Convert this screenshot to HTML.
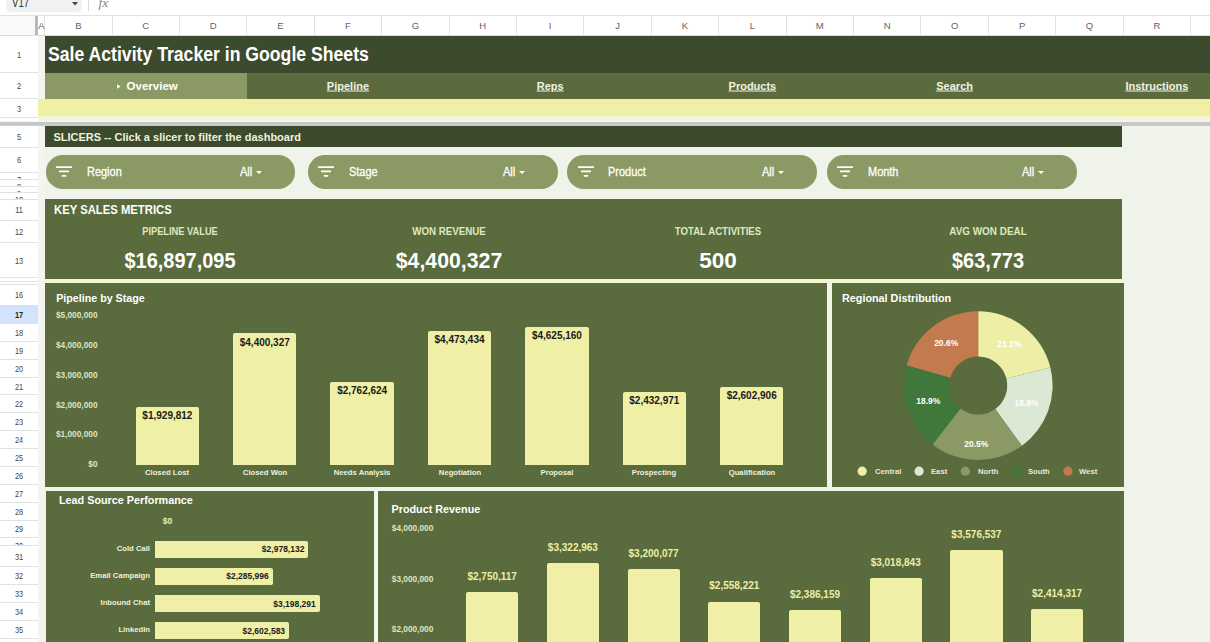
<!DOCTYPE html><html><head><meta charset="utf-8"><title>Sale Activity Tracker</title>
<style>
html,body{margin:0;padding:0;}
body{width:1210px;height:642px;overflow:hidden;position:relative;background:#f0f3ea;font-family:"Liberation Sans",sans-serif;}
.a{position:absolute;white-space:nowrap;}
.t{position:absolute;white-space:nowrap;line-height:1;}
.c{transform:translate(-50%,-50%);}
.r{transform:translate(-100%,-50%);}
.l{transform:translate(0,-50%);}
.b{font-weight:bold;}
</style></head><body>

<div class="a" style="left:0.00px;top:0.00px;width:1210.00px;height:15.00px;background:#ffffff;"></div>
<div class="a" style="left:5.60px;top:-6.00px;width:76.20px;height:18.40px;background:#eff1f2;border-radius:5px;"></div>
<div class="t l" style="left:12.40px;top:2.90px;font-size:12px;color:#303336;transform:translate(0,-50%) scaleX(0.8);transform-origin:left center;">V17</div>
<svg class="a" style="left:72.3px;top:1.9px" width="6" height="4" viewBox="0 0 6 4"><path d="M0 0H6L3 3.6Z" fill="#444746"/></svg>
<div class="a" style="left:88.40px;top:0.00px;width:1.00px;height:11.00px;background:#dadce0;"></div>
<div class="t" style="left:98.5px;top:-4px;font-size:13.5px;color:#80868b;font-style:italic;font-family:'Liberation Serif',serif;">fx</div>
<div class="a" style="left:0.00px;top:14.60px;width:1210.00px;height:1.00px;background:#dfe1e3;"></div>
<div class="a" style="left:0.00px;top:15.60px;width:1210.00px;height:20.00px;background:#ffffff;"></div>
<div class="a" style="left:0.00px;top:15.60px;width:35.30px;height:20.00px;background:#f8f9fa;"></div>
<div class="a" style="left:35.30px;top:15.60px;width:2.70px;height:20.00px;background:#b7b9bc;"></div>
<div class="a" style="left:0.00px;top:35.40px;width:1210.00px;height:0.80px;background:#dcdee0;"></div>
<div class="a" style="left:44.10px;top:15.60px;width:1.00px;height:20.00px;background:#e1e3e1;"></div>
<div class="t c" style="left:78.31px;top:25.80px;font-size:9.5px;color:#5f6368;">B</div>
<div class="a" style="left:111.51px;top:15.60px;width:1.00px;height:20.00px;background:#e1e3e1;"></div>
<div class="t c" style="left:145.71px;top:25.80px;font-size:9.5px;color:#5f6368;">C</div>
<div class="a" style="left:178.92px;top:15.60px;width:1.00px;height:20.00px;background:#e1e3e1;"></div>
<div class="t c" style="left:213.12px;top:25.80px;font-size:9.5px;color:#5f6368;">D</div>
<div class="a" style="left:246.33px;top:15.60px;width:1.00px;height:20.00px;background:#e1e3e1;"></div>
<div class="t c" style="left:280.53px;top:25.80px;font-size:9.5px;color:#5f6368;">E</div>
<div class="a" style="left:313.74px;top:15.60px;width:1.00px;height:20.00px;background:#e1e3e1;"></div>
<div class="t c" style="left:347.94px;top:25.80px;font-size:9.5px;color:#5f6368;">F</div>
<div class="a" style="left:381.15px;top:15.60px;width:1.00px;height:20.00px;background:#e1e3e1;"></div>
<div class="t c" style="left:415.35px;top:25.80px;font-size:9.5px;color:#5f6368;">G</div>
<div class="a" style="left:448.56px;top:15.60px;width:1.00px;height:20.00px;background:#e1e3e1;"></div>
<div class="t c" style="left:482.76px;top:25.80px;font-size:9.5px;color:#5f6368;">H</div>
<div class="a" style="left:515.97px;top:15.60px;width:1.00px;height:20.00px;background:#e1e3e1;"></div>
<div class="t c" style="left:550.18px;top:25.80px;font-size:9.5px;color:#5f6368;">I</div>
<div class="a" style="left:583.38px;top:15.60px;width:1.00px;height:20.00px;background:#e1e3e1;"></div>
<div class="t c" style="left:617.59px;top:25.80px;font-size:9.5px;color:#5f6368;">J</div>
<div class="a" style="left:650.79px;top:15.60px;width:1.00px;height:20.00px;background:#e1e3e1;"></div>
<div class="t c" style="left:685.00px;top:25.80px;font-size:9.5px;color:#5f6368;">K</div>
<div class="a" style="left:718.20px;top:15.60px;width:1.00px;height:20.00px;background:#e1e3e1;"></div>
<div class="t c" style="left:752.40px;top:25.80px;font-size:9.5px;color:#5f6368;">L</div>
<div class="a" style="left:785.61px;top:15.60px;width:1.00px;height:20.00px;background:#e1e3e1;"></div>
<div class="t c" style="left:819.82px;top:25.80px;font-size:9.5px;color:#5f6368;">M</div>
<div class="a" style="left:853.02px;top:15.60px;width:1.00px;height:20.00px;background:#e1e3e1;"></div>
<div class="t c" style="left:887.23px;top:25.80px;font-size:9.5px;color:#5f6368;">N</div>
<div class="a" style="left:920.43px;top:15.60px;width:1.00px;height:20.00px;background:#e1e3e1;"></div>
<div class="t c" style="left:954.63px;top:25.80px;font-size:9.5px;color:#5f6368;">O</div>
<div class="a" style="left:987.84px;top:15.60px;width:1.00px;height:20.00px;background:#e1e3e1;"></div>
<div class="t c" style="left:1022.05px;top:25.80px;font-size:9.5px;color:#5f6368;">P</div>
<div class="a" style="left:1055.25px;top:15.60px;width:1.00px;height:20.00px;background:#e1e3e1;"></div>
<div class="t c" style="left:1089.45px;top:25.80px;font-size:9.5px;color:#5f6368;">Q</div>
<div class="a" style="left:1122.66px;top:15.60px;width:1.00px;height:20.00px;background:#e1e3e1;"></div>
<div class="t c" style="left:1156.86px;top:25.80px;font-size:9.5px;color:#5f6368;">R</div>
<div class="a" style="left:1190.07px;top:15.60px;width:1.00px;height:20.00px;background:#e1e3e1;"></div>
<div class="t c" style="left:41.40px;top:25.80px;font-size:9.5px;color:#5f6368;">A</div>
<div class="a" style="left:0.00px;top:36.00px;width:38.20px;height:606.00px;background:#ffffff;"></div>
<div class="a" style="left:38.20px;top:36.00px;width:6.40px;height:606.00px;background:#f3f5ee;"></div>
<div class="a" style="left:0.00px;top:72.10px;width:38.20px;height:1.00px;background:#dfe1e3;"></div>
<div class="t c" style="left:19.00px;top:54.80px;font-size:9.7px;color:#44474a;transform:translate(-50%,-50%) scaleX(0.76);transform-origin:center;">1</div>
<div class="a" style="left:0.00px;top:98.10px;width:38.20px;height:1.00px;background:#dfe1e3;"></div>
<div class="t c" style="left:19.00px;top:86.10px;font-size:9.7px;color:#44474a;transform:translate(-50%,-50%) scaleX(0.76);transform-origin:center;">2</div>
<div class="a" style="left:0.00px;top:116.90px;width:38.20px;height:1.00px;background:#dfe1e3;"></div>
<div class="t c" style="left:19.00px;top:109.30px;font-size:9.7px;color:#44474a;transform:translate(-50%,-50%) scaleX(0.76);transform-origin:center;">3</div>
<div class="a" style="left:0.00px;top:146.90px;width:38.20px;height:1.00px;background:#dfe1e3;"></div>
<div class="t c" style="left:19.00px;top:136.95px;font-size:9.7px;color:#44474a;transform:translate(-50%,-50%) scaleX(0.76);transform-origin:center;">5</div>
<div class="a" style="left:0.00px;top:171.90px;width:38.20px;height:1.00px;background:#dfe1e3;"></div>
<div class="t c" style="left:19.00px;top:160.40px;font-size:9.7px;color:#44474a;transform:translate(-50%,-50%) scaleX(0.76);transform-origin:center;">6</div>
<div class="a" style="left:0.00px;top:178.60px;width:38.20px;height:1.00px;background:#dfe1e3;"></div>
<div class="a" style="left:0;top:172.40px;width:38.2px;height:6.20px;overflow:hidden;"><div class="t" style="left:18.8px;top:2.50px;transform:translate(-50%,0) scaleX(0.76);font-size:9.7px;color:#44474a;">7</div></div>
<div class="a" style="left:0.00px;top:185.60px;width:38.20px;height:1.00px;background:#dfe1e3;"></div>
<div class="a" style="left:0;top:179.10px;width:38.2px;height:6.50px;overflow:hidden;"><div class="t" style="left:18.8px;top:2.80px;transform:translate(-50%,0) scaleX(0.76);font-size:9.7px;color:#44474a;">8</div></div>
<div class="a" style="left:0.00px;top:192.40px;width:38.20px;height:1.00px;background:#dfe1e3;"></div>
<div class="a" style="left:0;top:186.10px;width:38.2px;height:6.30px;overflow:hidden;"><div class="t" style="left:18.8px;top:2.60px;transform:translate(-50%,0) scaleX(0.76);font-size:9.7px;color:#44474a;">9</div></div>
<div class="a" style="left:0.00px;top:198.80px;width:38.20px;height:1.00px;background:#dfe1e3;"></div>
<div class="a" style="left:0;top:192.90px;width:38.2px;height:5.90px;overflow:hidden;"><div class="t" style="left:18.8px;top:2.20px;transform:translate(-50%,0) scaleX(0.76);font-size:9.7px;color:#44474a;">10</div></div>
<div class="a" style="left:0.00px;top:220.00px;width:38.20px;height:1.00px;background:#dfe1e3;"></div>
<div class="t c" style="left:19.00px;top:210.40px;font-size:9.7px;color:#44474a;transform:translate(-50%,-50%) scaleX(0.76);transform-origin:center;">11</div>
<div class="a" style="left:0.00px;top:242.20px;width:38.20px;height:1.00px;background:#dfe1e3;"></div>
<div class="t c" style="left:19.00px;top:232.10px;font-size:9.7px;color:#44474a;transform:translate(-50%,-50%) scaleX(0.76);transform-origin:center;">12</div>
<div class="a" style="left:0.00px;top:277.30px;width:38.20px;height:1.00px;background:#dfe1e3;"></div>
<div class="t c" style="left:19.00px;top:260.75px;font-size:9.7px;color:#44474a;transform:translate(-50%,-50%) scaleX(0.76);transform-origin:center;">13</div>
<div class="a" style="left:0.00px;top:280.60px;width:38.20px;height:1.00px;background:#dfe1e3;"></div>
<div class="a" style="left:0.00px;top:284.00px;width:38.20px;height:1.00px;background:#dfe1e3;"></div>
<div class="a" style="left:0.00px;top:305.10px;width:38.20px;height:1.00px;background:#dfe1e3;"></div>
<div class="t c" style="left:19.00px;top:294.95px;font-size:9.7px;color:#44474a;transform:translate(-50%,-50%) scaleX(0.76);transform-origin:center;">16</div>
<div class="a" style="left:0.00px;top:305.60px;width:38.20px;height:17.87px;background:#d3e3fd;"></div>
<div class="a" style="left:0.00px;top:322.97px;width:38.20px;height:1.00px;background:#dfe1e3;"></div>
<div class="t c b" style="left:19.00px;top:315.04px;font-size:9.7px;color:#202124;transform:translate(-50%,-50%) scaleX(0.76);transform-origin:center;">17</div>
<div class="a" style="left:0.00px;top:340.84px;width:38.20px;height:1.00px;background:#dfe1e3;"></div>
<div class="t c" style="left:19.00px;top:332.91px;font-size:9.7px;color:#44474a;transform:translate(-50%,-50%) scaleX(0.76);transform-origin:center;">18</div>
<div class="a" style="left:0.00px;top:358.71px;width:38.20px;height:1.00px;background:#dfe1e3;"></div>
<div class="t c" style="left:19.00px;top:350.78px;font-size:9.7px;color:#44474a;transform:translate(-50%,-50%) scaleX(0.76);transform-origin:center;">19</div>
<div class="a" style="left:0.00px;top:376.58px;width:38.20px;height:1.00px;background:#dfe1e3;"></div>
<div class="t c" style="left:19.00px;top:368.65px;font-size:9.7px;color:#44474a;transform:translate(-50%,-50%) scaleX(0.76);transform-origin:center;">20</div>
<div class="a" style="left:0.00px;top:394.45px;width:38.20px;height:1.00px;background:#dfe1e3;"></div>
<div class="t c" style="left:19.00px;top:386.52px;font-size:9.7px;color:#44474a;transform:translate(-50%,-50%) scaleX(0.76);transform-origin:center;">21</div>
<div class="a" style="left:0.00px;top:412.32px;width:38.20px;height:1.00px;background:#dfe1e3;"></div>
<div class="t c" style="left:19.00px;top:404.39px;font-size:9.7px;color:#44474a;transform:translate(-50%,-50%) scaleX(0.76);transform-origin:center;">22</div>
<div class="a" style="left:0.00px;top:430.19px;width:38.20px;height:1.00px;background:#dfe1e3;"></div>
<div class="t c" style="left:19.00px;top:422.26px;font-size:9.7px;color:#44474a;transform:translate(-50%,-50%) scaleX(0.76);transform-origin:center;">23</div>
<div class="a" style="left:0.00px;top:448.06px;width:38.20px;height:1.00px;background:#dfe1e3;"></div>
<div class="t c" style="left:19.00px;top:440.13px;font-size:9.7px;color:#44474a;transform:translate(-50%,-50%) scaleX(0.76);transform-origin:center;">24</div>
<div class="a" style="left:0.00px;top:465.93px;width:38.20px;height:1.00px;background:#dfe1e3;"></div>
<div class="t c" style="left:19.00px;top:458.00px;font-size:9.7px;color:#44474a;transform:translate(-50%,-50%) scaleX(0.76);transform-origin:center;">25</div>
<div class="a" style="left:0.00px;top:483.80px;width:38.20px;height:1.00px;background:#dfe1e3;"></div>
<div class="t c" style="left:19.00px;top:475.87px;font-size:9.7px;color:#44474a;transform:translate(-50%,-50%) scaleX(0.76);transform-origin:center;">26</div>
<div class="a" style="left:0.00px;top:501.67px;width:38.20px;height:1.00px;background:#dfe1e3;"></div>
<div class="t c" style="left:19.00px;top:493.74px;font-size:9.7px;color:#44474a;transform:translate(-50%,-50%) scaleX(0.76);transform-origin:center;">27</div>
<div class="a" style="left:0.00px;top:519.54px;width:38.20px;height:1.00px;background:#dfe1e3;"></div>
<div class="t c" style="left:19.00px;top:511.61px;font-size:9.7px;color:#44474a;transform:translate(-50%,-50%) scaleX(0.76);transform-origin:center;">28</div>
<div class="a" style="left:0.00px;top:537.41px;width:38.20px;height:1.00px;background:#dfe1e3;"></div>
<div class="t c" style="left:19.00px;top:529.48px;font-size:9.7px;color:#44474a;transform:translate(-50%,-50%) scaleX(0.76);transform-origin:center;">29</div>
<div class="a" style="left:0.00px;top:544.90px;width:38.20px;height:1.00px;background:#dfe1e3;"></div>
<div class="a" style="left:0;top:537.90px;width:38.2px;height:7.00px;overflow:hidden;"><div class="t" style="left:18.8px;top:3.30px;transform:translate(-50%,0) scaleX(0.76);font-size:9.7px;color:#44474a;">30</div></div>
<div class="a" style="left:0.00px;top:566.40px;width:38.20px;height:1.00px;background:#dfe1e3;"></div>
<div class="t c" style="left:19.00px;top:556.65px;font-size:9.7px;color:#44474a;transform:translate(-50%,-50%) scaleX(0.76);transform-origin:center;">31</div>
<div class="a" style="left:0.00px;top:584.10px;width:38.20px;height:1.00px;background:#dfe1e3;"></div>
<div class="t c" style="left:19.00px;top:576.25px;font-size:9.7px;color:#44474a;transform:translate(-50%,-50%) scaleX(0.76);transform-origin:center;">32</div>
<div class="a" style="left:0.00px;top:601.90px;width:38.20px;height:1.00px;background:#dfe1e3;"></div>
<div class="t c" style="left:19.00px;top:594.00px;font-size:9.7px;color:#44474a;transform:translate(-50%,-50%) scaleX(0.76);transform-origin:center;">33</div>
<div class="a" style="left:0.00px;top:620.00px;width:38.20px;height:1.00px;background:#dfe1e3;"></div>
<div class="t c" style="left:19.00px;top:611.95px;font-size:9.7px;color:#44474a;transform:translate(-50%,-50%) scaleX(0.76);transform-origin:center;">34</div>
<div class="a" style="left:0.00px;top:638.30px;width:38.20px;height:1.00px;background:#dfe1e3;"></div>
<div class="t c" style="left:19.00px;top:630.15px;font-size:9.7px;color:#44474a;transform:translate(-50%,-50%) scaleX(0.76);transform-origin:center;">35</div>
<div class="a" style="left:0.00px;top:656.30px;width:38.20px;height:1.00px;background:#dfe1e3;"></div>
<div class="t c" style="left:19.00px;top:648.30px;font-size:9.7px;color:#44474a;transform:translate(-50%,-50%) scaleX(0.76);transform-origin:center;">36</div>
<div class="a" style="left:44.60px;top:36.00px;width:1166.00px;height:36.70px;background:#3c4a2d;"></div>
<div class="t l b" style="left:48.30px;top:55.40px;font-size:19.4px;color:#ffffff;transform:translate(0,-50%) scaleX(0.9095);transform-origin:left center;">Sale Activity Tracker in Google Sheets</div>
<div class="a" style="left:44.60px;top:72.50px;width:1166.00px;height:26.20px;background:#5b6b3e;"></div>
<div class="a" style="left:44.60px;top:72.50px;width:202.00px;height:26.20px;background:#8b9a64;"></div>
<div class="t l b" style="left:126.60px;top:86.80px;font-size:11.5px;color:#ffffff;">Overview</div>
<svg class="a" style="left:116.8px;top:84.3px" width="4" height="5" viewBox="0 0 4 5"><path d="M0 0.2L3.6 2.5L0 4.8Z" fill="#fff"/></svg>
<div class="t c b" style="left:347.94px;top:86.40px;font-size:11px;color:#f0f3e4;text-decoration:underline;">Pipeline</div>
<div class="t c b" style="left:550.17px;top:86.40px;font-size:11px;color:#f0f3e4;text-decoration:underline;">Reps</div>
<div class="t c b" style="left:752.40px;top:86.40px;font-size:11px;color:#f0f3e4;text-decoration:underline;">Products</div>
<div class="t c b" style="left:954.63px;top:86.40px;font-size:11px;color:#f0f3e4;text-decoration:underline;">Search</div>
<div class="t c b" style="left:1156.87px;top:86.40px;font-size:11px;color:#f0f3e4;text-decoration:underline;">Instructions</div>
<div class="a" style="left:38.20px;top:98.70px;width:1172.00px;height:16.90px;background:#efefa6;"></div>
<div class="a" style="left:38.2px;top:115.4px;width:1172px;height:6px;background:linear-gradient(#efefa6 0%,#f3f5e4 45%,#f3f5e6 100%);"></div>
<div class="a" style="left:0.00px;top:121.20px;width:1210.00px;height:0.80px;background:#f5f6f4;"></div>
<div class="a" style="left:0;top:121.9px;width:1210px;height:4.4px;background:linear-gradient(#c4c7c4 0%,#c5c8c4 60%,#c9cfc1 100%);"></div>
<div class="a" style="left:44.60px;top:126.30px;width:1077.20px;height:20.60px;background:#3c4a2d;"></div>
<div class="t l b" style="left:53.40px;top:137.00px;font-size:11px;color:#eef2dc;">SLICERS -- Click a slicer to filter the dashboard</div>
<div class="a" style="left:45.50px;top:155.30px;width:249.80px;height:33.30px;background:#8b9a64;border-radius:16.7px;"></div>
<svg class="a" style="left:56.0px;top:165.8px" width="16" height="11" viewBox="0 0 16 11"><path d="M0 0.2H16V1.9H0ZM3 4.6H13V6.3H3ZM5.8 9H10.2V10.7H5.8Z" fill="#fff"/></svg>
<div class="t l" style="left:86.90px;top:172.00px;font-size:12px;color:#ffffff;transform:translate(0,-50%) scaleX(0.913);transform-origin:left center;-webkit-text-stroke:0.3px #fff;">Region</div>
<div class="t l" style="left:240.30px;top:172.00px;font-size:12px;color:#ffffff;transform:translate(0,-50%) scaleX(0.92);transform-origin:left center;-webkit-text-stroke:0.3px #fff;">All</div>
<svg class="a" style="left:256.3px;top:170.6px" width="6" height="3" viewBox="0 0 6 3"><path d="M0 0H6L3 3Z" fill="#fff"/></svg>
<div class="a" style="left:307.90px;top:155.30px;width:249.80px;height:33.30px;background:#8b9a64;border-radius:16.7px;"></div>
<svg class="a" style="left:318.4px;top:165.8px" width="16" height="11" viewBox="0 0 16 11"><path d="M0 0.2H16V1.9H0ZM3 4.6H13V6.3H3ZM5.8 9H10.2V10.7H5.8Z" fill="#fff"/></svg>
<div class="t l" style="left:349.30px;top:172.00px;font-size:12px;color:#ffffff;transform:translate(0,-50%) scaleX(0.913);transform-origin:left center;-webkit-text-stroke:0.3px #fff;">Stage</div>
<div class="t l" style="left:502.70px;top:172.00px;font-size:12px;color:#ffffff;transform:translate(0,-50%) scaleX(0.92);transform-origin:left center;-webkit-text-stroke:0.3px #fff;">All</div>
<svg class="a" style="left:518.7px;top:170.6px" width="6" height="3" viewBox="0 0 6 3"><path d="M0 0H6L3 3Z" fill="#fff"/></svg>
<div class="a" style="left:567.00px;top:155.30px;width:249.80px;height:33.30px;background:#8b9a64;border-radius:16.7px;"></div>
<svg class="a" style="left:577.5px;top:165.8px" width="16" height="11" viewBox="0 0 16 11"><path d="M0 0.2H16V1.9H0ZM3 4.6H13V6.3H3ZM5.8 9H10.2V10.7H5.8Z" fill="#fff"/></svg>
<div class="t l" style="left:608.40px;top:172.00px;font-size:12px;color:#ffffff;transform:translate(0,-50%) scaleX(0.913);transform-origin:left center;-webkit-text-stroke:0.3px #fff;">Product</div>
<div class="t l" style="left:761.80px;top:172.00px;font-size:12px;color:#ffffff;transform:translate(0,-50%) scaleX(0.92);transform-origin:left center;-webkit-text-stroke:0.3px #fff;">All</div>
<svg class="a" style="left:777.8px;top:170.6px" width="6" height="3" viewBox="0 0 6 3"><path d="M0 0H6L3 3Z" fill="#fff"/></svg>
<div class="a" style="left:826.90px;top:155.30px;width:249.80px;height:33.30px;background:#8b9a64;border-radius:16.7px;"></div>
<svg class="a" style="left:837.4px;top:165.8px" width="16" height="11" viewBox="0 0 16 11"><path d="M0 0.2H16V1.9H0ZM3 4.6H13V6.3H3ZM5.8 9H10.2V10.7H5.8Z" fill="#fff"/></svg>
<div class="t l" style="left:868.30px;top:172.00px;font-size:12px;color:#ffffff;transform:translate(0,-50%) scaleX(0.913);transform-origin:left center;-webkit-text-stroke:0.3px #fff;">Month</div>
<div class="t l" style="left:1021.70px;top:172.00px;font-size:12px;color:#ffffff;transform:translate(0,-50%) scaleX(0.92);transform-origin:left center;-webkit-text-stroke:0.3px #fff;">All</div>
<svg class="a" style="left:1037.7px;top:170.6px" width="6" height="3" viewBox="0 0 6 3"><path d="M0 0H6L3 3Z" fill="#fff"/></svg>
<div class="a" style="left:44.60px;top:198.70px;width:1077.20px;height:80.00px;background:#5a6b3d;"></div>
<div class="a" style="left:44.60px;top:278.70px;width:1079.00px;height:4.30px;background:#f4f6d2;"></div>
<div class="t l b" style="left:53.60px;top:209.60px;font-size:12.8px;color:#ffffff;transform:translate(0,-50%) scaleX(0.882);transform-origin:left center;">KEY SALES METRICS</div>
<div class="t c b" style="left:180.00px;top:230.50px;font-size:11px;color:#dfe8bf;transform:translate(-50%,-50%) scaleX(0.8433);transform-origin:center;">PIPELINE VALUE</div>
<div class="t c b" style="left:180.00px;top:262.10px;font-size:21.3px;color:#ffffff;transform:translate(-50%,-50%) scaleX(0.9371);transform-origin:center;">$16,897,095</div>
<div class="t c b" style="left:448.60px;top:230.50px;font-size:11px;color:#dfe8bf;transform:translate(-50%,-50%) scaleX(0.8843);transform-origin:center;">WON REVENUE</div>
<div class="t c b" style="left:448.60px;top:262.10px;font-size:21.3px;color:#ffffff;transform:translate(-50%,-50%) scaleX(0.999);transform-origin:center;">$4,400,327</div>
<div class="t c b" style="left:718.40px;top:230.50px;font-size:11px;color:#dfe8bf;transform:translate(-50%,-50%) scaleX(0.8773);transform-origin:center;">TOTAL ACTIVITIES</div>
<div class="t c b" style="left:718.40px;top:262.10px;font-size:21.3px;color:#ffffff;transform:translate(-50%,-50%) scaleX(1.0552);transform-origin:center;">500</div>
<div class="t c b" style="left:987.80px;top:230.50px;font-size:11px;color:#dfe8bf;transform:translate(-50%,-50%) scaleX(0.9016);transform-origin:center;">AVG WON DEAL</div>
<div class="t c b" style="left:987.80px;top:262.10px;font-size:21.3px;color:#ffffff;transform:translate(-50%,-50%) scaleX(0.9351);transform-origin:center;">$63,773</div>
<div class="a" style="left:45.40px;top:283.10px;width:782.10px;height:203.80px;background:#5a6b3d;"></div>
<div class="t l b" style="left:56.20px;top:298.20px;font-size:10.7px;color:#ffffff;">Pipeline by Stage</div>
<div class="t r b" style="left:97.50px;top:464.20px;font-size:8.3px;color:#dde4c6;">$0</div>
<div class="t r b" style="left:97.50px;top:434.42px;font-size:8.3px;color:#dde4c6;">$1,000,000</div>
<div class="t r b" style="left:97.50px;top:404.64px;font-size:8.3px;color:#dde4c6;">$2,000,000</div>
<div class="t r b" style="left:97.50px;top:374.86px;font-size:8.3px;color:#dde4c6;">$3,000,000</div>
<div class="t r b" style="left:97.50px;top:345.08px;font-size:8.3px;color:#dde4c6;">$4,000,000</div>
<div class="t r b" style="left:97.50px;top:315.30px;font-size:8.3px;color:#dde4c6;">$5,000,000</div>
<div class="a" style="left:135.70px;top:406.93px;width:63.40px;height:57.87px;background:#efefa6;border-radius:2px 2px 0 0;"></div>
<div class="t c b" style="left:167.40px;top:416.13px;font-size:10px;color:#1a1a1a;">$1,929,812</div>
<div class="t c b" style="left:167.40px;top:473.40px;font-size:8px;color:#eef1dc;transform:translate(-50%,-50%) scaleX(0.963);transform-origin:center;">Closed Lost</div>
<div class="a" style="left:233.08px;top:333.36px;width:63.40px;height:131.44px;background:#efefa6;border-radius:2px 2px 0 0;"></div>
<div class="t c b" style="left:264.78px;top:342.56px;font-size:10px;color:#1a1a1a;">$4,400,327</div>
<div class="t c b" style="left:264.78px;top:473.40px;font-size:8px;color:#eef1dc;transform:translate(-50%,-50%) scaleX(0.963);transform-origin:center;">Closed Won</div>
<div class="a" style="left:330.46px;top:382.13px;width:63.40px;height:82.67px;background:#efefa6;border-radius:2px 2px 0 0;"></div>
<div class="t c b" style="left:362.16px;top:391.33px;font-size:10px;color:#1a1a1a;">$2,762,624</div>
<div class="t c b" style="left:362.16px;top:473.40px;font-size:8px;color:#eef1dc;transform:translate(-50%,-50%) scaleX(0.963);transform-origin:center;">Needs Analysis</div>
<div class="a" style="left:427.84px;top:331.18px;width:63.40px;height:133.62px;background:#efefa6;border-radius:2px 2px 0 0;"></div>
<div class="t c b" style="left:459.54px;top:340.38px;font-size:10px;color:#1a1a1a;">$4,473,434</div>
<div class="t c b" style="left:459.54px;top:473.40px;font-size:8px;color:#eef1dc;transform:translate(-50%,-50%) scaleX(0.963);transform-origin:center;">Negotiation</div>
<div class="a" style="left:525.22px;top:326.66px;width:63.40px;height:138.14px;background:#efefa6;border-radius:2px 2px 0 0;"></div>
<div class="t c b" style="left:556.92px;top:335.86px;font-size:10px;color:#1a1a1a;">$4,625,160</div>
<div class="t c b" style="left:556.92px;top:473.40px;font-size:8px;color:#eef1dc;transform:translate(-50%,-50%) scaleX(0.963);transform-origin:center;">Proposal</div>
<div class="a" style="left:622.60px;top:391.95px;width:63.40px;height:72.85px;background:#efefa6;border-radius:2px 2px 0 0;"></div>
<div class="t c b" style="left:654.30px;top:401.15px;font-size:10px;color:#1a1a1a;">$2,432,971</div>
<div class="t c b" style="left:654.30px;top:473.40px;font-size:8px;color:#eef1dc;transform:translate(-50%,-50%) scaleX(0.963);transform-origin:center;">Prospecting</div>
<div class="a" style="left:719.98px;top:386.89px;width:63.40px;height:77.91px;background:#efefa6;border-radius:2px 2px 0 0;"></div>
<div class="t c b" style="left:751.68px;top:396.09px;font-size:10px;color:#1a1a1a;">$2,602,906</div>
<div class="t c b" style="left:751.68px;top:473.40px;font-size:8px;color:#eef1dc;transform:translate(-50%,-50%) scaleX(0.963);transform-origin:center;">Qualification</div>
<div class="a" style="left:831.60px;top:283.10px;width:292.30px;height:203.80px;background:#5a6b3d;"></div>
<div class="t l b" style="left:842.00px;top:298.20px;font-size:10.8px;color:#ffffff;">Regional Distribution</div>
<svg class="a" style="left:0;top:0" width="1210" height="642" viewBox="0 0 1210 642">
<path d="M978.20 311.20A74.4 74.4 0 0 1 1050.38 367.55L1006.33 378.56A29 29 0 0 0 978.20 356.60Z" fill="#eeeea6"/>
<path d="M1050.38 367.55A74.4 74.4 0 0 1 1021.93 445.79L995.25 409.06A29 29 0 0 0 1006.33 378.56Z" fill="#dbe8d3"/>
<path d="M1021.93 445.79A74.4 74.4 0 0 1 932.60 444.39L960.43 408.51A29 29 0 0 0 995.25 409.06Z" fill="#8b9a64"/>
<path d="M932.60 444.39A74.4 74.4 0 0 1 906.63 365.29L950.30 377.68A29 29 0 0 0 960.43 408.51Z" fill="#40783b"/>
<path d="M906.63 365.29A74.4 74.4 0 0 1 978.20 311.20L978.20 356.60A29 29 0 0 0 950.30 377.68Z" fill="#c27a4e"/>
<circle cx="862.2" cy="471.2" r="4.6" fill="#eeeea6"/>
<circle cx="919.1" cy="471.2" r="4.6" fill="#dbe8d3"/>
<circle cx="965.4" cy="471.2" r="4.6" fill="#8b9a64"/>
<circle cx="1016.6" cy="471.2" r="4.6" fill="#40783b"/>
<circle cx="1067.9" cy="471.2" r="4.6" fill="#c27a4e"/>
</svg>
<div class="t c b" style="left:946.20px;top:342.80px;font-size:8.5px;color:#ffffff;">20.6%</div>
<div class="t c b" style="left:1009.30px;top:343.80px;font-size:8.5px;color:#ffffff;">21.1%</div>
<div class="t c b" style="left:1026.50px;top:403.00px;font-size:8.5px;color:#ffffff;">18.9%</div>
<div class="t c b" style="left:976.30px;top:444.30px;font-size:8.5px;color:#ffffff;">20.5%</div>
<div class="t c b" style="left:928.30px;top:401.30px;font-size:8.5px;color:#ffffff;">18.9%</div>
<div class="t l b" style="left:874.50px;top:471.90px;font-size:8px;color:#e6ead6;transform:translate(0,-50%) scaleX(0.96);transform-origin:left center;">Central</div>
<div class="t l b" style="left:930.70px;top:471.90px;font-size:8px;color:#e6ead6;transform:translate(0,-50%) scaleX(0.96);transform-origin:left center;">East</div>
<div class="t l b" style="left:977.60px;top:471.90px;font-size:8px;color:#e6ead6;transform:translate(0,-50%) scaleX(0.96);transform-origin:left center;">North</div>
<div class="t l b" style="left:1027.50px;top:471.90px;font-size:8px;color:#e6ead6;transform:translate(0,-50%) scaleX(0.96);transform-origin:left center;">South</div>
<div class="t l b" style="left:1079.40px;top:471.90px;font-size:8px;color:#e6ead6;transform:translate(0,-50%) scaleX(0.96);transform-origin:left center;">West</div>
<div class="a" style="left:45.60px;top:490.60px;width:328.90px;height:160.00px;background:#5a6b3d;"></div>
<div class="a" style="left:374.50px;top:490.60px;width:3.50px;height:160.00px;background:#f5f8ee;"></div>
<div class="t l b" style="left:58.90px;top:501.00px;font-size:11.5px;color:#ffffff;transform:translate(0,-50%) scaleX(0.939);transform-origin:left center;">Lead Source Performance</div>
<div class="t c b" style="left:167.60px;top:521.00px;font-size:8.5px;color:#f1f1a8;">$0</div>
<div class="a" style="left:155.20px;top:540.70px;width:153.22px;height:17.20px;background:#efefa6;border-radius:0 2px 2px 0;"></div>
<div class="t r b" style="left:150.30px;top:549.10px;font-size:8px;color:#eef1dc;transform:translate(-100%,-50%) scaleX(0.96);transform-origin:right center;">Cold Call</div>
<div class="t r b" style="left:304.42px;top:549.30px;font-size:8.5px;color:#1a1a1a;">$2,978,132</div>
<div class="a" style="left:155.20px;top:567.80px;width:117.61px;height:17.20px;background:#efefa6;border-radius:0 2px 2px 0;"></div>
<div class="t r b" style="left:150.30px;top:576.20px;font-size:8px;color:#eef1dc;transform:translate(-100%,-50%) scaleX(0.96);transform-origin:right center;">Email Campaign</div>
<div class="t r b" style="left:268.81px;top:576.40px;font-size:8.5px;color:#1a1a1a;">$2,285,996</div>
<div class="a" style="left:155.20px;top:594.90px;width:164.55px;height:17.20px;background:#efefa6;border-radius:0 2px 2px 0;"></div>
<div class="t r b" style="left:150.30px;top:603.30px;font-size:8px;color:#eef1dc;transform:translate(-100%,-50%) scaleX(0.96);transform-origin:right center;">Inbound Chat</div>
<div class="t r b" style="left:315.75px;top:603.50px;font-size:8.5px;color:#1a1a1a;">$3,198,291</div>
<div class="a" style="left:155.20px;top:622.00px;width:133.90px;height:17.20px;background:#efefa6;border-radius:0 2px 2px 0;"></div>
<div class="t r b" style="left:150.30px;top:630.40px;font-size:8px;color:#eef1dc;transform:translate(-100%,-50%) scaleX(0.96);transform-origin:right center;">LinkedIn</div>
<div class="t r b" style="left:285.10px;top:630.60px;font-size:8.5px;color:#1a1a1a;">$2,602,583</div>
<div class="a" style="left:378.00px;top:490.60px;width:745.90px;height:160.00px;background:#5a6b3d;"></div>
<div class="t l b" style="left:391.50px;top:509.30px;font-size:10.8px;color:#ffffff;">Product Revenue</div>
<div class="t l b" style="left:391.80px;top:629.20px;font-size:8.3px;color:#dde4c6;">$2,000,000</div>
<div class="t l b" style="left:391.80px;top:578.50px;font-size:8.3px;color:#dde4c6;">$3,000,000</div>
<div class="t l b" style="left:391.80px;top:527.80px;font-size:8.3px;color:#dde4c6;">$4,000,000</div>
<div class="a" style="left:466.10px;top:591.77px;width:52.30px;height:68.23px;background:#efefa6;border-radius:2px 2px 0 0;"></div>
<div class="t c b" style="left:492.20px;top:576.57px;font-size:10px;color:#eeeea6;">$2,750,117</div>
<div class="a" style="left:546.80px;top:562.73px;width:52.30px;height:97.27px;background:#efefa6;border-radius:2px 2px 0 0;"></div>
<div class="t c b" style="left:572.90px;top:547.53px;font-size:10px;color:#eeeea6;">$3,322,963</div>
<div class="a" style="left:627.50px;top:568.96px;width:52.30px;height:91.04px;background:#efefa6;border-radius:2px 2px 0 0;"></div>
<div class="t c b" style="left:653.60px;top:553.76px;font-size:10px;color:#eeeea6;">$3,200,077</div>
<div class="a" style="left:708.20px;top:601.50px;width:52.30px;height:58.50px;background:#efefa6;border-radius:2px 2px 0 0;"></div>
<div class="t c b" style="left:734.30px;top:586.30px;font-size:10px;color:#eeeea6;">$2,558,221</div>
<div class="a" style="left:788.90px;top:610.22px;width:52.30px;height:49.78px;background:#efefa6;border-radius:2px 2px 0 0;"></div>
<div class="t c b" style="left:815.00px;top:595.02px;font-size:10px;color:#eeeea6;">$2,386,159</div>
<div class="a" style="left:869.60px;top:578.14px;width:52.30px;height:81.86px;background:#efefa6;border-radius:2px 2px 0 0;"></div>
<div class="t c b" style="left:895.70px;top:562.94px;font-size:10px;color:#eeeea6;">$3,018,843</div>
<div class="a" style="left:950.30px;top:549.87px;width:52.30px;height:110.13px;background:#efefa6;border-radius:2px 2px 0 0;"></div>
<div class="t c b" style="left:976.40px;top:534.67px;font-size:10px;color:#eeeea6;">$3,576,537</div>
<div class="a" style="left:1031.00px;top:608.79px;width:52.30px;height:51.21px;background:#efefa6;border-radius:2px 2px 0 0;"></div>
<div class="t c b" style="left:1057.10px;top:593.59px;font-size:10px;color:#eeeea6;">$2,414,317</div>
</body></html>
